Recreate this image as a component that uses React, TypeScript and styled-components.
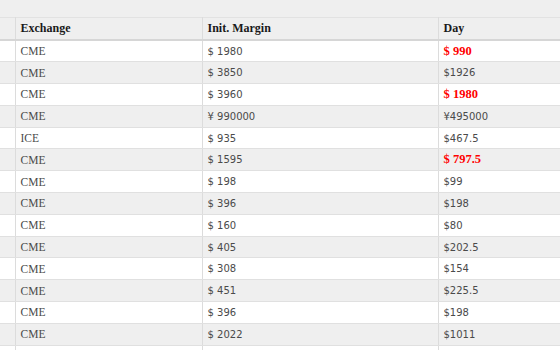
import styled, { createGlobalStyle } from 'styled-components';

interface MarginRow {
    exchange: string;
    margin: string;
    day: string;
    highlight?: boolean;
}

const rows: MarginRow[] = [
    { exchange: 'CME', margin: '$ 1980', day: '$ 990', highlight: true },
    { exchange: 'CME', margin: '$ 3850', day: '$1926' },
    { exchange: 'CME', margin: '$ 3960', day: '$ 1980', highlight: true },
    { exchange: 'CME', margin: '¥ 990000', day: '¥495000' },
    { exchange: 'ICE', margin: '$ 935', day: '$467.5' },
    { exchange: 'CME', margin: '$ 1595', day: '$ 797.5', highlight: true },
    { exchange: 'CME', margin: '$ 198', day: '$99' },
    { exchange: 'CME', margin: '$ 396', day: '$198' },
    { exchange: 'CME', margin: '$ 160', day: '$80' },
    { exchange: 'CME', margin: '$ 405', day: '$202.5' },
    { exchange: 'CME', margin: '$ 308', day: '$154' },
    { exchange: 'CME', margin: '$ 451', day: '$225.5' },
    { exchange: 'CME', margin: '$ 396', day: '$198' },
    { exchange: 'CME', margin: '$ 2022', day: '$1011' },
    // next row only peeks in below the fold
    { exchange: '', margin: '', day: '' },
];

const GlobalStyle = createGlobalStyle`
    html, body {
        margin: 0;
        padding: 0;
        background: #ffffff;
        overflow: hidden;
    }
`;

const App = () => {
    return (
        <Page>
            <GlobalStyle />
            <TopBand />
            <Table>
                <colgroup>
                    <col style={{ width: 15 }} />
                    <col style={{ width: 187 }} />
                    <col style={{ width: 236 }} />
                    <col />
                </colgroup>
                <thead>
                    <tr>
                        <HeadCell />
                        <HeadCell>Exchange</HeadCell>
                        <HeadCell>Init. Margin</HeadCell>
                        <HeadCell>Day</HeadCell>
                    </tr>
                </thead>
                <tbody>
                    {rows.map((row, i) => (
                        <Row key={i} $striped={i % 2 === 1}>
                            <Cell />
                            <TextCell>{row.exchange}</TextCell>
                            <NumberCell>{row.margin}</NumberCell>
                            {row.highlight ? <AlertCell>{row.day}</AlertCell> : <NumberCell>{row.day}</NumberCell>}
                        </Row>
                    ))}
                </tbody>
            </Table>
        </Page>
    );
};

const Page = styled.div`
    width: 560px;
    height: 350px;
    overflow: hidden;
    background: #ffffff;
`;

const TopBand = styled.div`
    height: 17px;
    background: #efefef;
`;

const Table = styled.table`
    width: 100%;
    border-collapse: collapse;
    table-layout: fixed;
`;

const HeadCell = styled.th`
    height: 21px;
    padding: 0 5px;
    text-align: left;
    background: #efefef;
    border-top: 1px solid #e2e2e2;
    border-bottom: 2px solid #d6d6d6;
    border-right: 1px solid #dcdcdc;
    font-family: 'Liberation Serif', serif;
    font-size: 12px;
    font-weight: bold;
    color: #1a1a1a;
    &:last-child {
        border-right: none;
    }
`;

const Row = styled.tr<{ $striped: boolean }>`
    height: 21.8px;
    background: ${(p) => (p.$striped ? '#efefef' : '#ffffff')};
`;

const Cell = styled.td`
    padding: 0 5px;
    border-bottom: 1px solid #e0e0e0;
    border-right: 1px solid #dcdcdc;
    color: #4a4a4a;
    white-space: nowrap;
    &:last-child {
        border-right: none;
    }
`;

const TextCell = styled(Cell)`
    font-family: 'Liberation Serif', serif;
    font-size: 11.5px;
`;

const NumberCell = styled(Cell)`
    font-family: 'DejaVu Sans', sans-serif;
    font-size: 10px;
`;

const AlertCell = styled(Cell)`
    font-family: 'Liberation Serif', serif;
    font-size: 12.5px;
    font-weight: bold;
    color: #ff0000;
`;

export default App;
